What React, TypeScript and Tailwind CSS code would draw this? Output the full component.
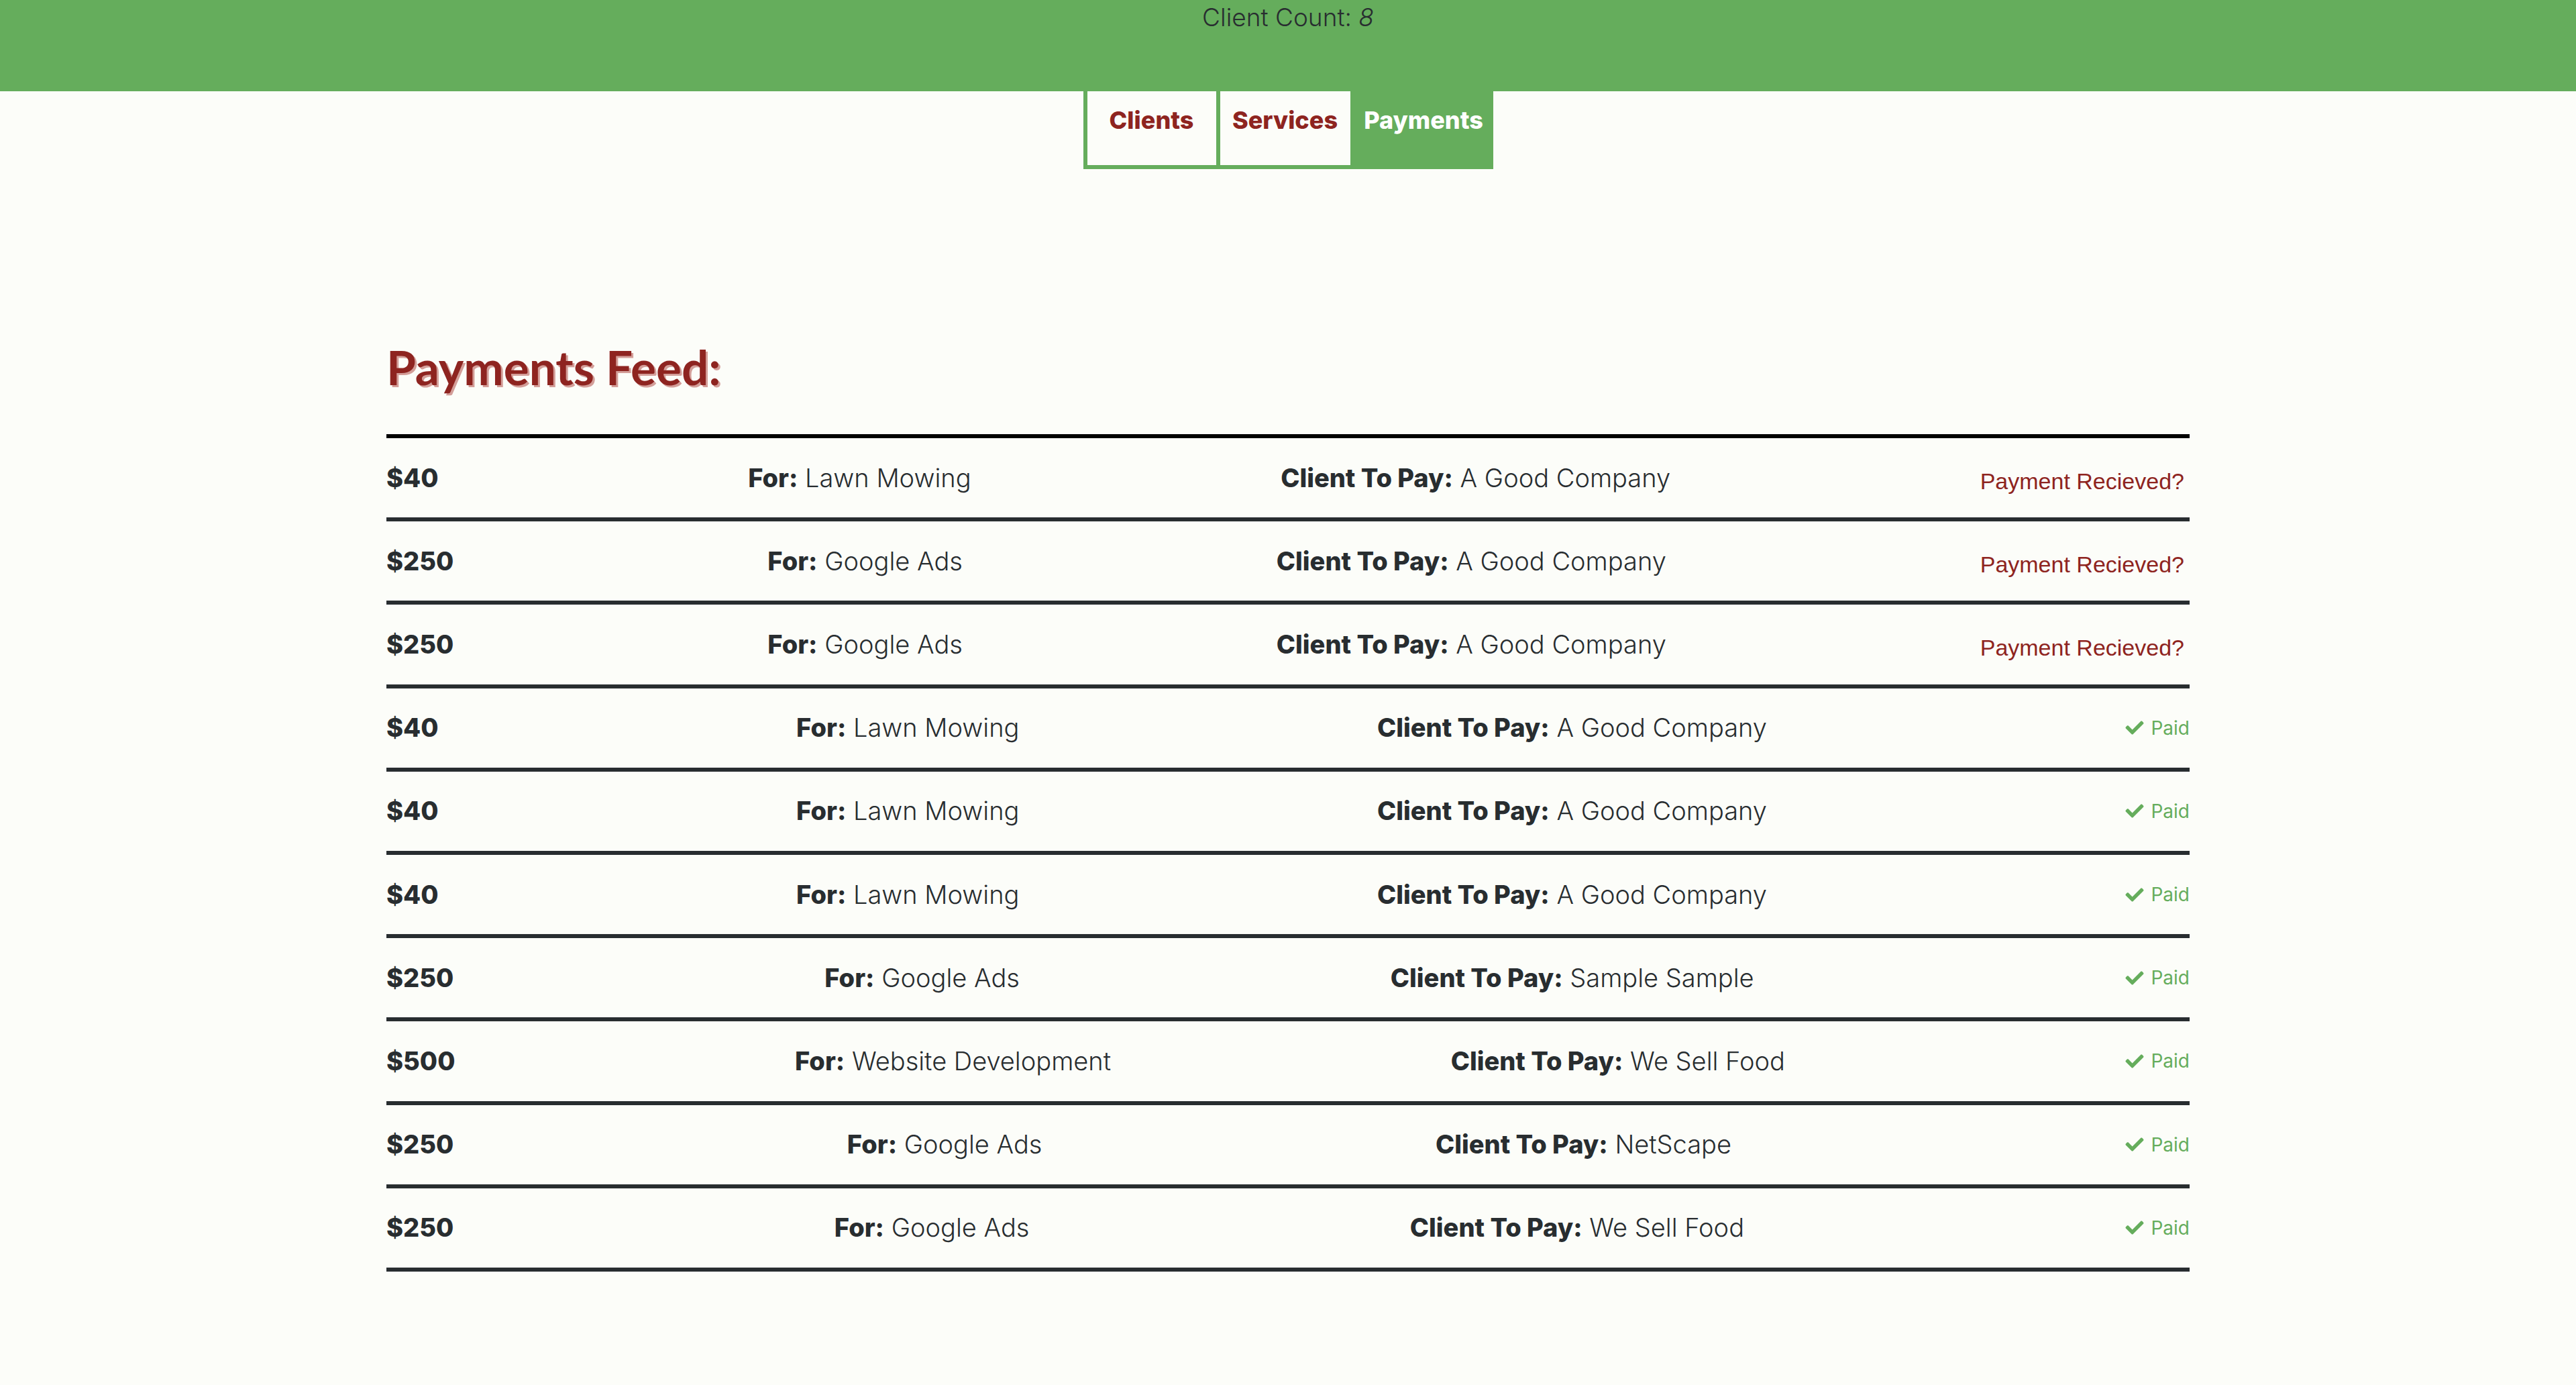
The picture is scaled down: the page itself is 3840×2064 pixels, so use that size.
import { FaCheck } from 'react-icons/fa';

const payments = [
  { amount: 40, service: 'Lawn Mowing', client: 'A Good Company', paid: false },
  { amount: 250, service: 'Google Ads', client: 'A Good Company', paid: false },
  { amount: 250, service: 'Google Ads', client: 'A Good Company', paid: false },
  { amount: 40, service: 'Lawn Mowing', client: 'A Good Company', paid: true },
  { amount: 40, service: 'Lawn Mowing', client: 'A Good Company', paid: true },
  { amount: 40, service: 'Lawn Mowing', client: 'A Good Company', paid: true },
  { amount: 250, service: 'Google Ads', client: 'Sample Sample', paid: true },
  { amount: 500, service: 'Website Development', client: 'We Sell Food', paid: true },
  { amount: 250, service: 'Google Ads', client: 'NetScape', paid: true },
  { amount: 250, service: 'Google Ads', client: 'We Sell Food', paid: true },
];

export default function App() {
  return (
    <div className="min-h-screen bg-[#fcfdf9] font-['Inter',sans-serif] text-[#282d30]">
      {/* header */}
      <header className="h-[136px] bg-[#65ad5c] pt-[2px] text-center text-[37px] leading-[48px] font-light">
        Client Count: <em>8</em>
      </header>

      {/* tabs */}
      <nav className="flex justify-center">
        <div className="flex gap-[6px] bg-[#65ad5c] pb-[6px] pl-[6px]">
          <button className="h-[110px] w-[192px] bg-[#fcfdf9] pb-[24px] text-[36px] font-extrabold text-[#8e2420]">
            Clients
          </button>
          <button className="h-[110px] w-[194px] bg-[#fcfdf9] pb-[24px] text-[36px] font-extrabold text-[#8e2420]">
            Services
          </button>
          <button className="h-[110px] w-[207px] bg-[#65ad5c] pb-[24px] text-[36px] font-extrabold text-white">
            Payments
          </button>
        </div>
      </nav>

      <main className="mx-auto w-[70%] pt-[259px] pb-[160px]">
        <h1 className="mb-[64px] font-['Lato',sans-serif] text-[71px] leading-[72px] font-bold text-[#8e2420] [text-shadow:3px_3px_0_#d39e99]">
          Payments Feed:
        </h1>

        <div className="border-t-[6px] border-black">
          {payments.map((p, i) => (
            <div
              key={i}
              className="flex h-[124.2px] items-center justify-between border-b-[6px] border-[#282d30] text-[38px]"
            >
              <span className="font-extrabold">${p.amount}</span>
              <span>
                <b className="font-extrabold">For:</b> <span className="font-light">{p.service}</span>
              </span>
              <span>
                <b className="font-extrabold">Client To Pay:</b> <span className="font-light">{p.client}</span>
              </span>
              {p.paid ? (
                <span className="flex items-center gap-[9px] text-[28px] text-[#65ad5c]">
                  <FaCheck className="h-[27px] w-[30px]" />
                  Paid
                </span>
              ) : (
                <button className="mt-[10px] pr-[8px] font-['Liberation_Sans',sans-serif] text-[34px] text-[#8e2420]">
                  Payment Recieved?
                </button>
              )}
            </div>
          ))}
        </div>
      </main>
    </div>
  );
}
